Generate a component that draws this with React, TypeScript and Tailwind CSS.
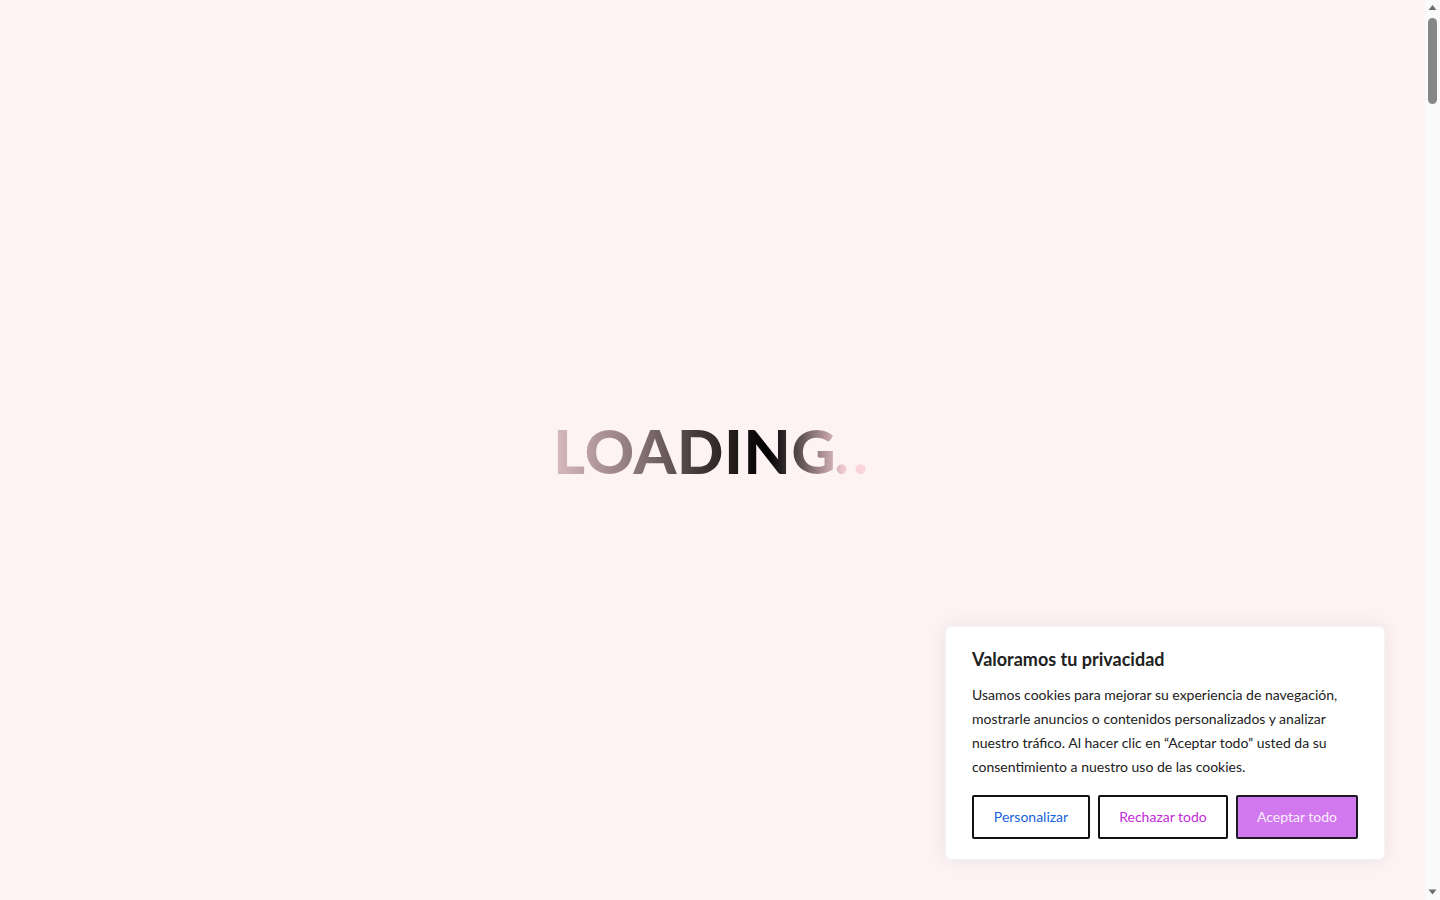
import React from "react";

function Scrollbar() {
  return (
    <div className="w-[15px] h-full bg-[#fafafa] flex flex-col items-center shrink-0">
      <svg width="15" height="15" viewBox="0 0 15 15" className="shrink-0">
        <polygon points="3.5,10 11.5,10 7.5,5" fill="#6e6e6e" />
      </svg>
      <div className="mt-[3px] w-[9px] h-[86px] rounded-[5px] bg-[#878787]" />
      <div className="flex-1" />
      <svg width="15" height="15" viewBox="0 0 15 15" className="shrink-0">
        <polygon points="3.5,4.5 11.5,4.5 7.5,9.5" fill="#6e6e6e" />
      </svg>
    </div>
  );
}

export default function App() {
  return (
    <div
      className="bg-[#fdf3f4] h-screen w-full flex overflow-hidden"
      style={{ fontFamily: "Lato, 'Noto Sans', sans-serif" }}
    >
      <main className="relative flex-1 h-full flex items-center justify-center">
        <div
          className="text-[61px] font-black leading-none bg-clip-text text-transparent flex items-baseline"
          style={{
            backgroundImage:
              "linear-gradient(90deg, #dabcc0 0%, #917c80 24%, #3c3233 48%, #000000 67%, #3a3132 74%, #c6a6ab 87%, #f8d0d6 92%, #fbd8dd 100%)",
            fontFamily: "Lato, sans-serif",
          }}
        >
          <span className="tracking-[0.8px]">LOADING</span>
          <span className="tracking-[4px] -ml-[2px]">..</span>
        </div>

        <div className="absolute right-[40px] bottom-[40px] w-[440px] bg-white rounded-[6px] border border-[#f4f4f4] shadow-[0_0_18px_rgba(0,0,0,0.08)] pl-[26px] pr-[25px] pt-[20px] pb-[20px] text-[#212121]">
          <h2 className="text-[18px] font-bold leading-[24px] m-0">Valoramos tu privacidad</h2>
          <p className="mt-[12px] text-[14px] leading-[24px] text-[#212121]">
            Usamos cookies para mejorar su experiencia de navegación, mostrarle anuncios o contenidos personalizados y analizar nuestro tráfico. Al hacer clic en “Aceptar todo” usted da su consentimiento a nuestro uso de las cookies.
          </p>
          <div className="mt-[16px] flex gap-[8px]">
            <button className="w-[118px] h-[44px] border-2 border-[#111111] rounded-[2px] bg-white text-[14px] text-[#1863dc] leading-none">
              Personalizar
            </button>
            <button className="w-[130px] h-[44px] border-2 border-[#111111] rounded-[2px] bg-white text-[14px] text-[#c22dd6] leading-none">
              Rechazar todo
            </button>
            <button className="w-[122px] h-[44px] border-2 border-[#1c1a24] rounded-[2px] bg-[#d178ef] text-[14px] text-[#fbeefe] leading-none">
              Aceptar todo
            </button>
          </div>
        </div>
      </main>
      <Scrollbar />
    </div>
  );
}
